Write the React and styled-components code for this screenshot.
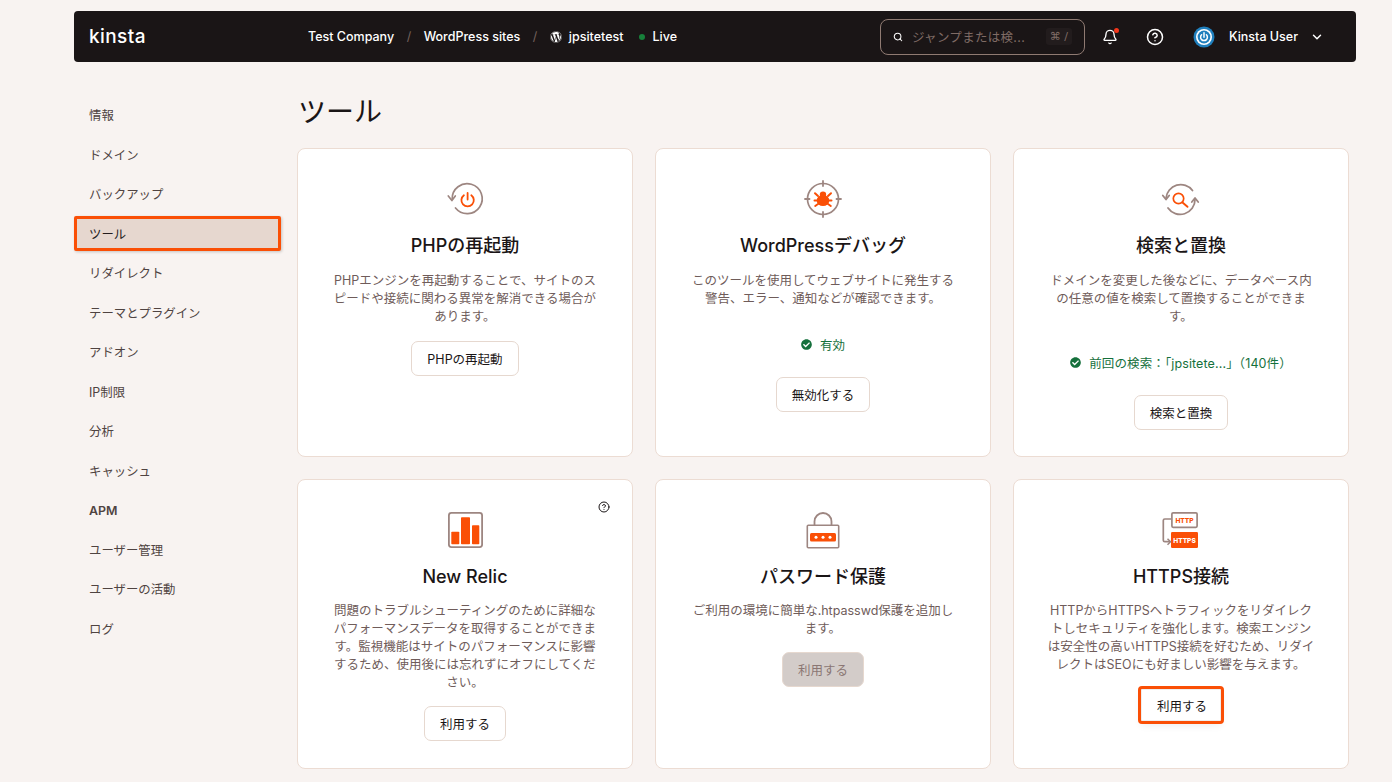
import React from 'react';
import styled, { createGlobalStyle } from 'styled-components';
import { Search, Bell, CircleHelp, ChevronDown } from 'lucide-react';
import { FaWordpress, FaCheckCircle } from 'react-icons/fa';

const orange = '#fa4f06';
const taupe = '#9d8681';

const GlobalStyle = createGlobalStyle`
    html, body {
        margin: 0;
        height: 100%;
        overflow: hidden;
        background: #f8f3f1;
    }
    body {
        font-family: Inter, "Noto Sans CJK JP", sans-serif;
        font-size: 12.5px;
        -webkit-font-smoothing: antialiased;
    }
    * { box-sizing: border-box; }
`;

const Shell = styled.div`
    padding: 11px 36px 0 74px;
`;

const TopBar = styled.header`
    height: 51px;
    display: flex;
    align-items: center;
    padding: 0 32px 0 15px;
    background: #1a1516;
    border-radius: 4px;
    color: #fff;
`;

const Logo = styled.div`
    width: 219px;
    font-family: Inter, sans-serif;
    font-size: 19px;
    font-weight: 500;
    letter-spacing: 0.4px;
    line-height: 1;
`;

const Crumbs = styled.nav`
    display: flex;
    align-items: center;
    font-weight: 500;
    white-space: nowrap;
`;

const Slash = styled.span`
    margin: 0 12.5px;
    color: #75625d;
    font-weight: 400;
`;

const LiveDot = styled.span`
    width: 6px;
    height: 6px;
    border-radius: 50%;
    background: #17803a;
    margin: 0 8px 0 15px;
`;

const RightGroup = styled.div`
    margin-left: auto;
    display: flex;
    align-items: center;
`;

const SearchBox = styled.div`
    width: 205px;
    height: 36px;
    display: flex;
    align-items: center;
    padding: 0 12px;
    border: 1px solid #8f7a72;
    border-radius: 8px;
    color: #7f6b65;
    svg { color: #fff; margin-right: 9px; }
`;

const SearchHint = styled.span`
    flex: 1;
    white-space: nowrap;
    letter-spacing: 0.3px;
`;

const Kbd = styled.span`
    padding: 2px 4px;
    font-size: 11px;
    background: #221c1d;
    border-radius: 3px;
    font-family: "DejaVu Sans", sans-serif;
`;

const IconSlot = styled.span`
    position: relative;
    display: flex;
    margin-left: ${p => p.$gap}px;
`;

const RedDot = styled.span`
    position: absolute;
    top: -1px;
    right: -1px;
    width: 5px;
    height: 5px;
    border-radius: 50%;
    background: #f4361a;
`;

const UserName = styled.span`
    margin: 0 12px 0 14px;
    font-weight: 500;
    white-space: nowrap;
`;

const Content = styled.div`
    display: flex;
    gap: 16px;
`;

const SideNav = styled.nav`
    width: 207px;
    flex: none;
    padding-top: 35.5px;
    display: flex;
    flex-direction: column;
    gap: 4.5px;
`;

const NavItem = styled.a`
    height: 35px;
    display: flex;
    align-items: center;
    padding-left: ${p => (p.$active ? 12 : 15)}px;
    color: ${p => (p.$active ? '#241c1c' : '#4f4341')};
    font-size: 12.4px;
    font-weight: ${p => (p.$latin ? 600 : 400)};
    background: ${p => (p.$active ? '#e6d7cf' : 'transparent')};
    border: ${p => (p.$active ? `3px solid ${orange}` : 'none')};
    border-radius: 2px;
    box-shadow: ${p => (p.$active ? '1px 1px 3px rgba(0,0,0,0.2)' : 'none')};
`;

const Main = styled.main`
    width: 1052px;
    padding-top: 32px;
`;

const Title = styled.h1`
    margin: 0 0 18px 1px;
    height: 36px;
    font-size: 28px;
    line-height: 36px;
    font-weight: 400;
    color: #1a1516;
`;

const CardGrid = styled.div`
    display: grid;
    grid-template-columns: repeat(3, 336px);
    grid-template-rows: 309px 290px;
    gap: 22px;

    section:nth-child(n+4) h2 {
        margin-bottom: 13px;
    }
`;

const Card = styled.section`
    position: relative;
    display: flex;
    flex-direction: column;
    align-items: center;
    padding: 26px 30px 0;
    background: #fff;
    border: 1px solid #ecdcd3;
    border-radius: 8px;
`;

const CardIcon = styled.svg`
    width: 48px;
    height: 48px;
    flex: none;
`;

const CardTitle = styled.h2`
    margin: 11px 0 14px;
    font-size: 18px;
    line-height: 24px;
    font-weight: 500;
    color: #1a1516;
    white-space: nowrap;
`;

const Description = styled.p`
    margin: 0;
    width: 268px;
    font-size: 12.5px;
    line-height: 18px;
    text-align: center;
    color: #6f5c5a;
`;

const Status = styled.div`
    display: flex;
    align-items: center;
    gap: 8px;
    height: 18px;
    margin-top: 27px;
    color: #15703c;
    letter-spacing: 0.12px;
    white-space: nowrap;
`;

const ActionButton = styled.button`
    height: ${p => (p.$marked ? 32 : 35)}px;
    margin-top: ${p => p.$gap}px;
    padding: ${p => (p.$marked ? '0 12.5px 0 14.5px' : '0 15px')};
    font: inherit;
    font-size: 12.5px;
    white-space: nowrap;
    color: ${p => (p.disabled ? '#8a7673' : '#1a1516')};
    background: ${p => (p.disabled ? '#d3ccc9' : '#fff')};
    border: 1px solid ${p => (p.$marked ? '#eee' : '#e6d8cf')};
    border-radius: ${p => (p.$marked ? 1 : 7)}px;
    outline: ${p => (p.$marked ? `3px solid ${orange}` : 'none')};
    box-shadow: ${p => (p.$marked ? '0 4px 8px rgba(0,0,0,0.08)' : 'none')};
`;

const HelpBadge = styled.span`
    position: absolute;
    top: 21px;
    right: 22px;
    display: flex;
    color: #1a1516;
`;

const RestartIcon = () => (
    <CardIcon viewBox="0 0 48 48" fill="none">
        <path d="M11.2 24A15 15 0 1 1 14.5 33" stroke={taupe} strokeWidth="1.7" strokeLinecap="round" />
        <path d="M7.3 21l3.6 4.5 3.4-4.5" stroke={taupe} strokeWidth="1.7" strokeLinecap="round" strokeLinejoin="round" />
        <path d="M22.9 20.2a6.2 6.2 0 1 0 7.4 0M26.6 18v6.5" stroke={orange} strokeWidth="1.8" strokeLinecap="round" />
    </CardIcon>
);

const BugIcon = () => (
    <CardIcon viewBox="0 0 48 48" fill="none">
        <circle cx="24" cy="24" r="15.5" stroke={taupe} strokeWidth="1.7" />
        <path d="M24 6v5M24 37v5M6 24h4.5M37.5 24h4.5" stroke={taupe} strokeWidth="1.8" strokeLinecap="round" />
        <ellipse cx="24" cy="25.5" rx="6.3" ry="5.6" fill={orange} />
        <circle cx="24" cy="19.8" r="3.2" fill={orange} />
        <path d="M19 21l-3-2.8M29 21l3-2.8M18.5 25.5h-3M29.5 25.5h3M19 29l-2.8 2M29 29l2.8 2" stroke={orange} strokeWidth="2" strokeLinecap="round" />
    </CardIcon>
);

const ReplaceIcon = () => (
    <CardIcon viewBox="0 0 48 48" fill="none">
        <path d="M9 23A14.8 14.8 0 0 1 35.5 15.5" stroke={taupe} strokeWidth="1.8" strokeLinecap="round" />
        <path d="M38 24.5A14.8 14.8 0 0 1 11 33" stroke={taupe} strokeWidth="1.8" strokeLinecap="round" />
        <path d="M5.8 20.5l3.2 4 3.2-4M34.8 27l3.2-4 3.2 4" stroke={taupe} strokeWidth="1.8" strokeLinecap="round" strokeLinejoin="round" />
        <circle cx="21.5" cy="23.5" r="5.2" stroke={orange} strokeWidth="1.7" />
        <path d="M25.5 27.5l5 4.3" stroke={orange} strokeWidth="1.9" strokeLinecap="round" />
    </CardIcon>
);

const RelicIcon = () => (
    <CardIcon viewBox="0 0 48 48" fill="none">
        <rect x="7.9" y="6.9" width="33.2" height="34.2" rx="2.5" stroke={taupe} strokeWidth="1.8" />
        <rect x="10.3" y="25.7" width="8" height="12.6" rx="0.8" fill={orange} />
        <rect x="20" y="11.3" width="9" height="27" rx="0.8" fill={orange} />
        <rect x="31" y="19.3" width="7.3" height="19" rx="0.8" fill={orange} />
    </CardIcon>
);

const LockIcon = () => (
    <CardIcon viewBox="0 0 48 48" fill="none">
        <path d="M15.5 19V15.5a8.5 8.5 0 0 1 17 0V19" stroke={taupe} strokeWidth="1.8" />
        <rect x="8.3" y="19.3" width="31.4" height="22.4" rx="1" stroke={taupe} strokeWidth="1.6" />
        <rect x="11" y="27" width="26" height="8.5" rx="1.5" fill={orange} />
        <circle cx="17" cy="31.2" r="1.5" fill="#fff" />
        <circle cx="24" cy="31.2" r="1.5" fill="#fff" />
        <circle cx="31" cy="31.2" r="1.5" fill="#fff" />
    </CardIcon>
);

const HttpsIcon = () => (
    <CardIcon viewBox="0 0 48 48" fill="none">
        <rect x="14.9" y="6.9" width="25.2" height="14.4" rx="1.2" stroke={taupe} strokeWidth="1.7" />
        <text x="27.5" y="16.5" textAnchor="middle" fontSize="6.6" fontWeight="800" fontFamily="Inter, sans-serif" fill={orange}>HTTP</text>
        <rect x="14" y="26" width="27" height="16" rx="1.2" fill={orange} />
        <text x="27.5" y="36.5" textAnchor="middle" fontSize="6.6" fontWeight="800" fontFamily="Inter, sans-serif" fill="#fff">HTTPS</text>
        <path d="M14 13H7.8a1.5 1.5 0 0 0-1.5 1.5V34.2a1.5 1.5 0 0 0 1.5 1.5H13" stroke={taupe} strokeWidth="1.7" />
        <path d="M10.5 32.7l3 3-3 3" stroke={taupe} strokeWidth="1.5" />
    </CardIcon>
);

const UserAvatar = () => (
    <svg width="22" height="22" viewBox="0 0 22 22" fill="none">
        <circle cx="11" cy="11" r="10.5" fill="#1f7fbd" />
        <circle cx="11" cy="11" r="8" fill="#fff" />
        <circle cx="11" cy="11" r="6.4" fill="#1f7fbd" />
        <path d="M8.6 8.8a3.4 3.4 0 1 0 4.8 0M11 6.8v4.4" stroke="#fff" strokeWidth="1.5" strokeLinecap="round" />
    </svg>
);

const navItems = [
    '情報', 'ドメイン', 'バックアップ', 'ツール', 'リダイレクト', 'テーマとプラグイン', 'アドオン',
    'IP制限', '分析', 'キャッシュ', 'APM', 'ユーザー管理', 'ユーザーの活動', 'ログ',
];

const tools = [
    {
        icon: RestartIcon,
        title: 'PHPの再起動',
        text: 'PHPエンジンを再起動することで、サイトのスピードや接続に関わる異常を解消できる場合があります。',
        action: 'PHPの再起動',
        gap: 15,
    },
    {
        icon: BugIcon,
        title: 'WordPressデバッグ',
        text: 'このツールを使用してウェブサイトに発生する警告、エラー、通知などが確認できます。',
        status: '有効',
        action: '無効化する',
        gap: 24,
    },
    {
        icon: ReplaceIcon,
        title: '検索と置換',
        text: 'ドメインを変更した後などに、データベース内の任意の値を検索して置換することができます。',
        status: '前回の検索：「jpsitete...」（140件）',
        action: '検索と置換',
        gap: 24,
    },
    {
        icon: RelicIcon,
        title: 'New Relic',
        text: '問題のトラブルシューティングのために詳細なパフォーマンスデータを取得することができます。監視機能はサイトのパフォーマンスに影響するため、使用後には忘れずにオフにしてください。',
        action: '利用する',
        gap: 14,
        help: true,
    },
    {
        icon: LockIcon,
        title: 'パスワード保護',
        text: 'ご利用の環境に簡単な.htpasswd保護を追加します。',
        action: '利用する',
        gap: 14,
        disabled: true,
    },
    {
        icon: HttpsIcon,
        title: 'HTTPS接続',
        text: 'HTTPからHTTPSへトラフィックをリダイレクトしセキュリティを強化します。検索エンジンは安全性の高いHTTPS接続を好むため、リダイレクトはSEOにも好ましい影響を与えます。',
        action: '利用する',
        gap: 15,
        marked: true,
    },
];

const ToolCard = ({ tool }) => {
    const Icon = tool.icon;
    return (
        <Card>
            {tool.help ? <HelpBadge><CircleHelp size={12} /></HelpBadge> : null}
            <Icon />
            <CardTitle>{tool.title}</CardTitle>
            <Description>{tool.text}</Description>
            {tool.status ?
                <Status><FaCheckCircle size={11} />{tool.status}</Status>
            : null
            }
            <ActionButton $gap={tool.gap} $marked={tool.marked} disabled={tool.disabled}>
                {tool.action}
            </ActionButton>
        </Card>
    );
};

const WpMark = styled(FaWordpress)`
    margin-right: 7px;
`;

const App = () => (
    <Shell>
        <GlobalStyle />
        <TopBar>
            <Logo>kinsta</Logo>
            <Crumbs>
                Test Company
                <Slash>/</Slash>
                WordPress sites
                <Slash>/</Slash>
                <WpMark size={12} />
                jpsitetest
                <LiveDot />
                Live
            </Crumbs>
            <RightGroup>
                <SearchBox>
                    <Search size={10} strokeWidth={2.5} />
                    <SearchHint>ジャンプまたは検...</SearchHint>
                    <Kbd>⌘ /</Kbd>
                </SearchBox>
                <IconSlot $gap={17}>
                    <Bell size={16} />
                    <RedDot />
                </IconSlot>
                <IconSlot $gap={28}>
                    <CircleHelp size={18} />
                </IconSlot>
                <IconSlot $gap={29}>
                    <UserAvatar />
                </IconSlot>
                <UserName>Kinsta User</UserName>
                <ChevronDown size={14} strokeWidth={2.5} />
            </RightGroup>
        </TopBar>
        <Content>
            <SideNav>
                {navItems.map(item => (
                    <NavItem key={item} $active={item === 'ツール'} $latin={item === 'APM'}>
                        {item}
                    </NavItem>
                ))}
            </SideNav>
            <Main>
                <Title>ツール</Title>
                <CardGrid>
                    {tools.map(tool => <ToolCard key={tool.title} tool={tool} />)}
                </CardGrid>
            </Main>
        </Content>
    </Shell>
);

export default App;
